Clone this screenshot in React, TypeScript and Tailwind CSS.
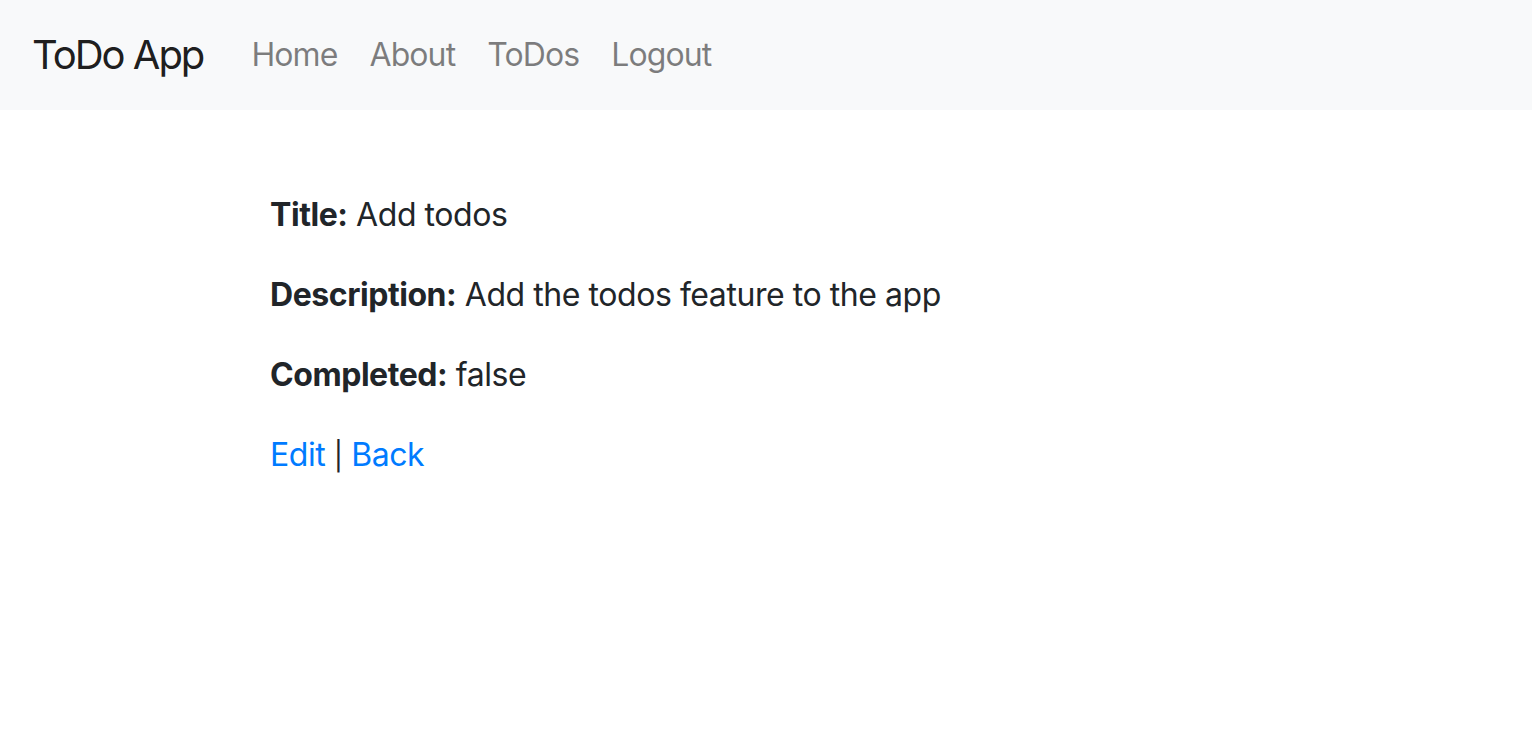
import React from "react";

export default function App() {
  const font = { fontFamily: "Inter, 'Noto Sans', sans-serif" };
  return (
    <div className="min-h-[732px] bg-white" style={font}>
      <nav className="flex h-[110px] items-center bg-[#f8f9fa] px-[32px]">
        <a className="mr-[32px] text-[40px] leading-[60px] tracking-[-0.05em] text-[rgba(0,0,0,0.9)]">ToDo App</a>
        <ul className="flex items-center">
          {["Home", "About", "ToDos", "Logout"].map((l) => (
            <li key={l}>
              <a className="block px-[16px] text-[32px] leading-[48px] tracking-[-0.028em] text-[rgba(0,0,0,0.5)]">{l}</a>
            </li>
          ))}
        </ul>
      </nav>
      <main className="pl-[270px] pt-[81px] text-[32px] leading-[48px] tracking-[-0.014em] text-[#212529]">
        <p className="mb-[32px]">
          <strong className="font-bold">Title:</strong> Add todos
        </p>
        <p className="mb-[32px]">
          <strong className="font-bold">Description:</strong> Add the todos feature to the app
        </p>
        <p className="mb-[32px]">
          <strong className="font-bold">Completed:</strong> false
        </p>
        <p className="mb-[32px]">
          <a className="text-[#007bff]">Edit</a> <span className="text-[28px]">|</span> <a className="text-[#007bff]">Back</a>
        </p>
      </main>
    </div>
  );
}
